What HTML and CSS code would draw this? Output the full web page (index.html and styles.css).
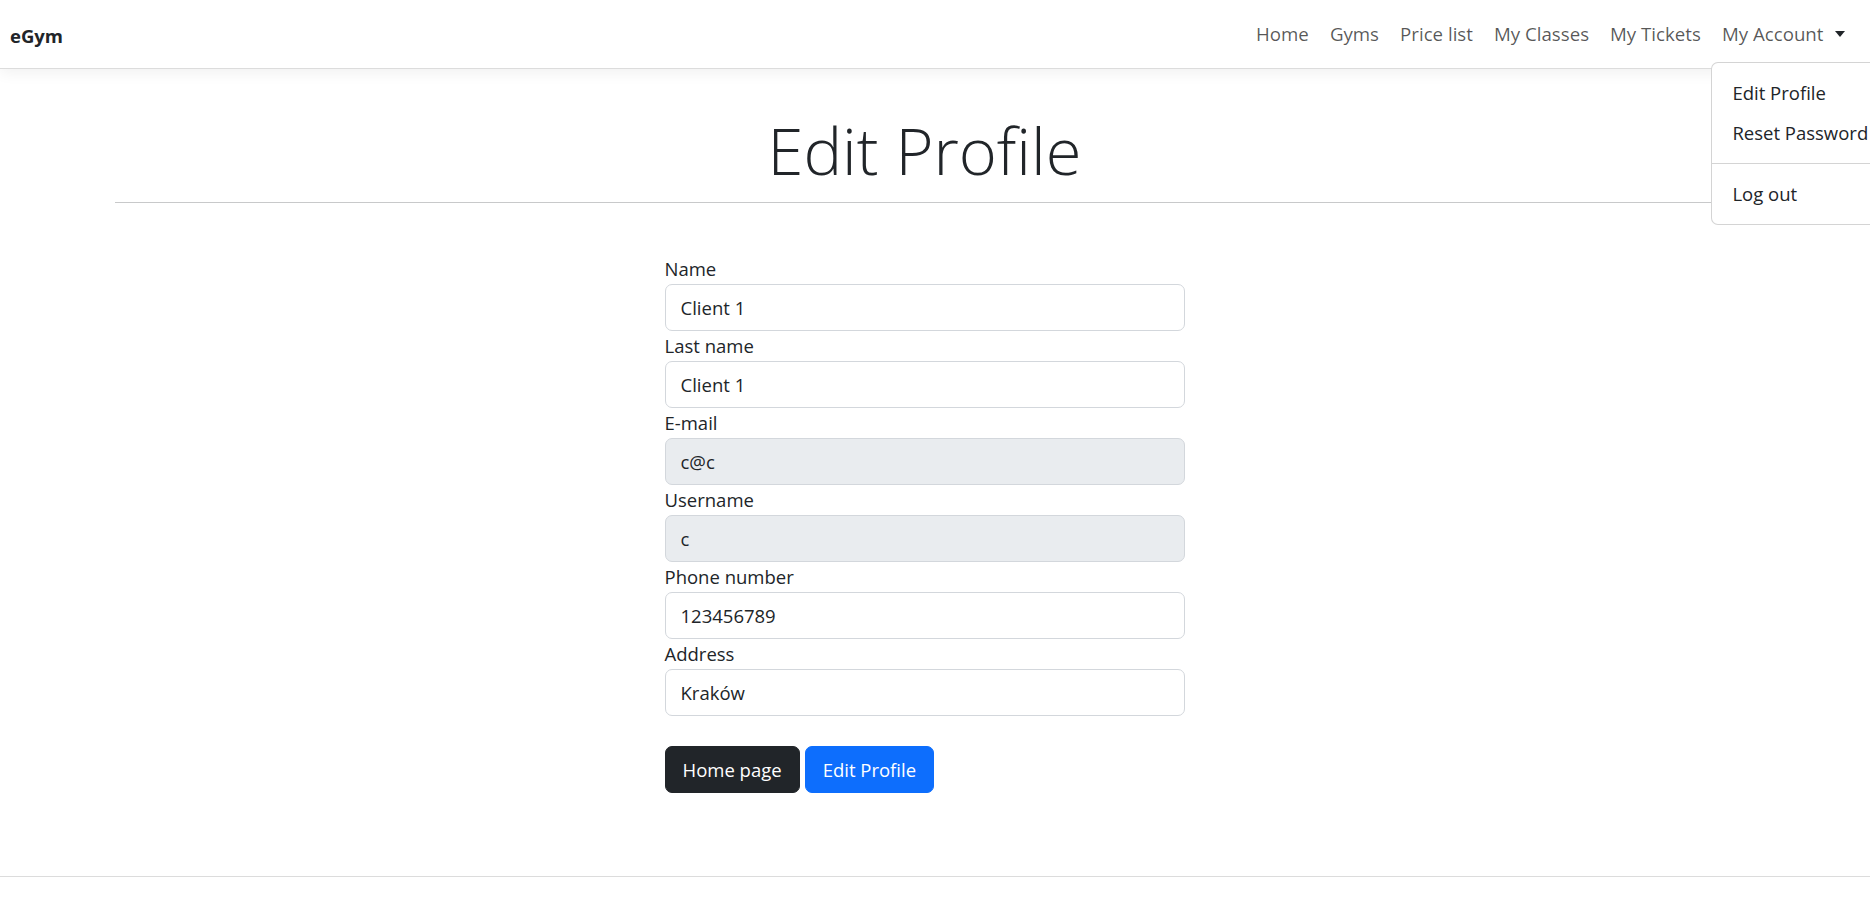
FILE: index.html
```html
<!DOCTYPE html>
<html lang="en">
<head>
<meta charset="utf-8">
<title>Edit Profile</title>
<link rel="stylesheet" href="styles.css">
</head>
<body>
<header class="navbar">
  <a class="brand" href="#">eGym</a>
  <ul class="nav">
    <li class="nav-item"><a class="nav-link" href="#">Home</a></li>
    <li class="nav-item"><a class="nav-link" href="#">Gyms</a></li>
    <li class="nav-item"><a class="nav-link" href="#">Price list</a></li>
    <li class="nav-item"><a class="nav-link" href="#">My Classes</a></li>
    <li class="nav-item"><a class="nav-link" href="#">My Tickets</a></li>
    <li class="nav-item dropdown">
      <a class="nav-link" href="#">My Account<span class="caret"></span></a>
      <div class="dropdown-menu">
        <a class="dropdown-item" href="#">Edit Profile</a>
        <a class="dropdown-item" href="#">Reset Password</a>
        <div class="dropdown-divider"></div>
        <a class="dropdown-item" href="#">Log out</a>
      </div>
    </li>
  </ul>
</header>

<div class="page">
  <main class="container">
    <h1 class="title">Edit Profile</h1>
    <hr class="rule">
    <form class="profile-form">
      <label class="field-label" for="name">Name</label>
      <input class="field" id="name" type="text" value="Client 1">
      <label class="field-label" for="lastname">Last name</label>
      <input class="field" id="lastname" type="text" value="Client 1">
      <label class="field-label" for="email">E-mail</label>
      <input class="field" id="email" type="text" value="c@c" disabled>
      <label class="field-label" for="username">Username</label>
      <input class="field" id="username" type="text" value="c" disabled>
      <label class="field-label" for="phone">Phone number</label>
      <input class="field" id="phone" type="text" value="123456789">
      <label class="field-label" for="address">Address</label>
      <input class="field" id="address" type="text" value="Kraków">
      <div class="actions">
        <a class="btn btn-dark" href="#">Home page</a>
        <button class="btn btn-primary" type="button">Edit Profile</button>
      </div>
    </form>
  </main>
</div>
<footer class="footer"></footer>
</body>
</html>
```
FILE: styles.css
```css
* { box-sizing: border-box; }

body {
  margin: 0;
  font-family: "Open Sans", "Noto Sans", "Liberation Sans", sans-serif;
  font-size: 18.5px;
  line-height: 30px;
  color: #212529;
  background: #fff;
  overflow-x: hidden;
}

a { text-decoration: none; }

.navbar {
  position: relative;
  z-index: 10;
  display: flex;
  align-items: center;
  justify-content: space-between;
  height: 69px;
  padding: 0 15px 0 10px;
  background: #fff;
  border-bottom: 1px solid #dcdcdc;
  box-shadow: 0 4px 14px rgba(0, 0, 0, 0.06);
}

.brand {
  font-weight: 700;
  font-size: 18.5px;
  color: #212529;
  margin-top: 4px;
}

.nav {
  display: flex;
  list-style: none;
  margin: 0;
  padding: 0;
}

.nav-item { position: relative; }

.nav-link {
  display: block;
  padding: 10px 10.5px;
  font-size: 18.7px;
  line-height: 30px;
  color: rgba(0, 0, 0, 0.66);
}

.caret {
  display: inline-block;
  margin-left: 11px;
  vertical-align: 4px;
  border-top: 6px solid #212529;
  border-left: 5px solid transparent;
  border-right: 5px solid transparent;
}

.dropdown-menu {
  position: absolute;
  left: 0;
  top: calc(100% + 3px);
  min-width: 200px;
  padding: 10px 0;
  background: #fff;
  border: 1px solid rgba(0, 0, 0, 0.17);
  border-radius: 7px;
  white-space: nowrap;
}

.dropdown-item {
  display: block;
  padding: 5px 20px;
  line-height: 30px;
  color: #212529;
}

.dropdown-divider {
  height: 0;
  margin: 10px 0;
  border-top: 1px solid rgba(0, 0, 0, 0.17);
}

.page { padding-right: 21px; }

.container {
  max-width: 1620px;
  margin: 0 auto;
}

.title {
  margin: 42px 0 0;
  font-size: 65px;
  font-weight: 300;
  line-height: 78px;
  text-align: center;
  color: #212529;
}

.rule {
  margin: 13px 0 0;
  border: 0;
  border-top: 1px solid #c8c9ca;
}

.profile-form {
  width: 520px;
  margin: 51px auto 0;
  display: flex;
  flex-direction: column;
}

.field-label {
  display: block;
  height: 30px;
  line-height: 30px;
}

.field {
  display: block;
  width: 100%;
  height: 47px;
  padding: 0 15px;
  font: inherit;
  color: #212529;
  background: #fff;
  border: 1px solid #d3d7dc;
  border-radius: 7px;
}

.field:disabled {
  background: #e9ecef;
  color: #212529;
  -webkit-text-fill-color: #212529;
  opacity: 1;
}

.actions {
  display: flex;
  gap: 5px;
  margin-top: 30px;
}

.btn {
  display: inline-block;
  height: 47px;
  padding: 0 17px;
  font: inherit;
  line-height: 45px;
  border: 1px solid transparent;
  border-radius: 7px;
  color: #fff;
  cursor: pointer;
}

.btn-dark {
  background: #212529;
  border-color: #212529;
}

.btn-primary {
  background: #0d6efd;
  border-color: #0d6efd;
}

.footer {
  margin-top: 83px;
  border-top: 1px solid #dcdcdc;
}
```
